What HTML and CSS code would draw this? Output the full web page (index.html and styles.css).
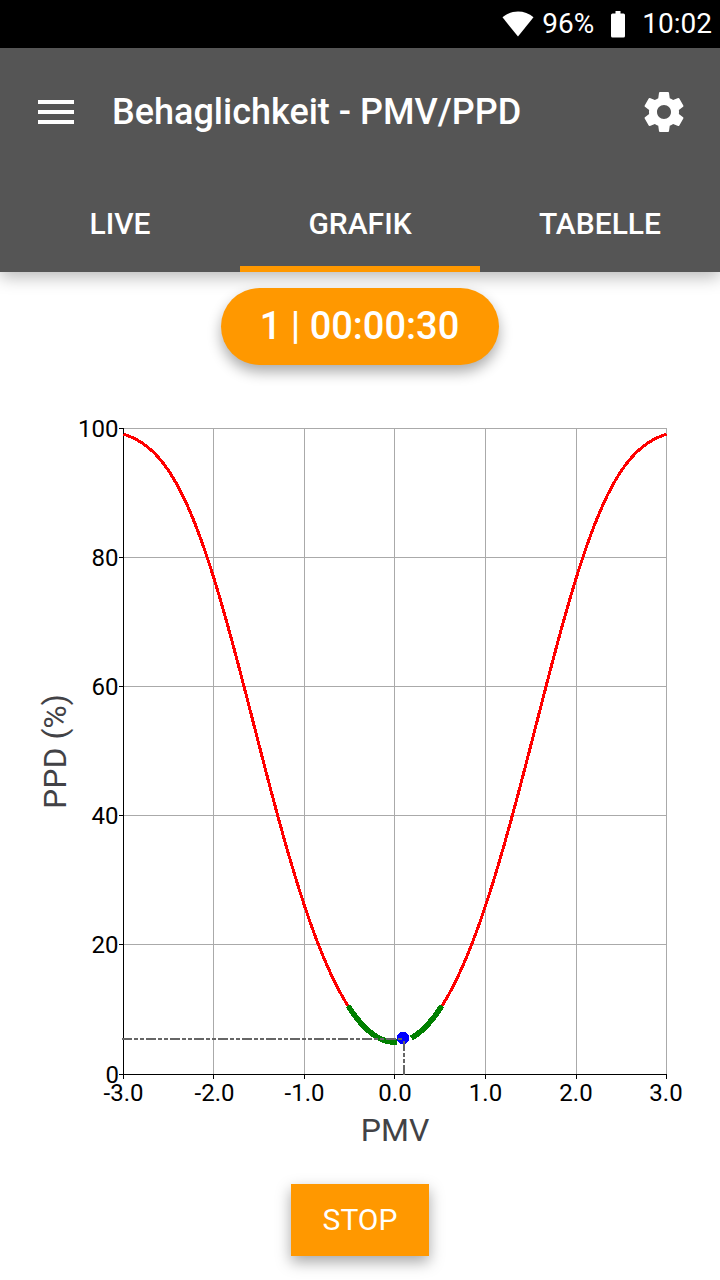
FILE: index.html
```html
<!DOCTYPE html>
<html lang="de">
<head>
<meta charset="utf-8">
<title>Behaglichkeit - PMV/PPD</title>
<link rel="stylesheet" href="styles.css">
</head>
<body>
<div class="status-bar">
  <svg class="wifi" width="32" height="26" viewBox="0 0 32 26"><path d="M0.5 6.3C9-1.300 23-1.300 31.500 6.300L16 25.600Z" fill="#fff"/></svg>
  <span class="battery-level">96%</span>
  <svg class="battery" width="14" height="27" viewBox="0 0 14 27"><path d="M4.500 0h5v2.500h3q1.500 0 1.500 1.500v21q0 1.500-1.500 1.500h-11q-1.500 0-1.500-1.500v-21q0-1.500 1.500-1.500h3z" fill="#fff"/></svg>
  <span class="clock">10:02</span>
</div>
<header class="app-header">
  <div class="toolbar">
    <svg class="menu" width="36" height="24" viewBox="0 0 36 24"><path d="M0 0h36v4H0zM0 10h36v4H0zM0 20h36v4H0z" fill="#fff"/></svg>
    <h1 class="title">Behaglichkeit - PMV/PPD</h1>
    <svg class="settings" width="48" height="48" viewBox="0 0 24 24"><path fill="#fff" d="M19.430 12.980c.04-.32.07-.64.07-.98s-.03-.66-.07-.98l2.110-1.650c.19-.15.24-.42.12-.64l-2-3.460c-.12-.22-.39-.3-.61-.22l-2.490 1c-.52-.4-1.080-.73-1.690-.98l-.38-2.650C14.460 2.180 14.250 2 14 2h-4c-.25 0-.46.18-.49.42l-.38 2.650c-.61.25-1.170.59-1.690.98l-2.490-1c-.23-.09-.49 0-.61.22l-2 3.460c-.13.22-.07.49.12.64l2.110 1.650c-.04.32-.07.65-.07.98s.03.66.07.98l-2.110 1.650c-.19.15-.24.42-.12.64l2 3.460c.12.22.39.3.61.22l2.490-1c.52.4 1.080.73 1.690.98l.38 2.650c.03.24.24.42.49.42h4c.25 0 .46-.18.49-.42l.38-2.650c.61-.25 1.170-.59 1.690-.98l2.490 1c.23.09.49 0 .61-.22l2-3.460c.12-.22.07-.49-.12-.64l-2.110-1.650zM12 15.500c-1.930 0-3.500-1.570-3.500-3.500s1.570-3.500 3.500-3.500 3.500 1.570 3.500 3.500-1.570 3.500-3.500 3.500z"/></svg>
  </div>
  <nav class="tabs">
    <div class="tab">LIVE</div>
    <div class="tab tab-active">GRAFIK</div>
    <div class="tab">TABELLE</div>
  </nav>
</header>
<main class="content">
  <div class="timer">1 | 00:00:30</div>
  <svg class="chart" width="720" height="760" viewBox="0 400 720 760">
    <g class="grid">
      <path d="M213.500 428V1074M304.500 428V1074M394.500 428V1074M485.500 428V1074M576.500 428V1074M666.500 428V1074M123 428.500H667M123 557.500H667M123 686.500H667M123 815.500H667M123 944.500H667"/>
    </g>
    <path class="axes" d="M123.500 428V1079M119 1074.500H667M119 428.500h4M119 557.500h4M119 686.500h4M119 815.500h4M119 944.500h4M213.500 1074v5M304.500 1074v5M394.500 1074v5M485.500 1074v5M576.500 1074v5M666.500 1074v5"/>
    <path class="curve" id="curve"/>
    <path class="comfort" id="comfort"/>
    <circle class="point" cx="403" cy="1038" r="6.300"/>
    <path class="guide" d="M122 1039H402M404 1075V1041"/>
    <g class="y-labels">
      <text x="118.500" y="437">100</text><text x="118.500" y="566">80</text><text x="118.500" y="695">60</text><text x="118.500" y="824">40</text><text x="118.500" y="953">20</text><text x="119" y="1083">0</text>
    </g>
    <g class="x-labels">
      <text x="123.500" y="1101">-3.0</text><text x="214.500" y="1101">-2.0</text><text x="304.500" y="1101">-1.0</text><text x="395" y="1101">0.0</text><text x="485.500" y="1101">1.0</text><text x="576" y="1101">2.0</text><text x="666" y="1101">3.0</text>
    </g>
    <text class="axis-title" x="395" y="1141">PMV</text>
    <text class="axis-title" transform="translate(65.500 751.500) rotate(-90)">PPD (%)</text>
  </svg>
  <button class="stop">STOP</button>
</main>
<script src="chart.js"></script>
</body>
</html>
```
FILE: styles.css
```css
body {
  margin: 0;
  width: 720px;
  height: 1280px;
  overflow: hidden;
  display: flex;
  flex-direction: column;
  background: #fff;
  font-family: Roboto, sans-serif;
}
.status-bar {
  height: 48px;
  box-sizing: border-box;
  padding-right: 8px;
  display: flex;
  justify-content: flex-end;
  align-items: center;
  background: #000;
  color: #fff;
  font-size: 28px;
}
.battery-level, .clock { padding-bottom: 2px; }
.wifi { margin-right: 8px; }
.battery { margin: 0 17px; }
.app-header {
  height: 224px;
  background: #555;
  color: #fff;
  box-shadow: 0 5px 16px rgba(0, 0, 0, .28);
}
.toolbar {
  height: 128px;
  box-sizing: border-box;
  padding: 0 32px 0 38px;
  display: flex;
  align-items: center;
}
.title {
  flex: 1;
  margin: 0 0 0 38px;
  font-size: 36px;
  font-weight: 500;
  white-space: nowrap;
}
.tabs {
  height: 96px;
  display: grid;
  grid-template-columns: repeat(3, 1fr);
}
.tab {
  display: flex;
  justify-content: center;
  align-items: center;
  padding-bottom: 2px;
  font-size: 30px;
  font-weight: 500;
}
.tab-active { box-shadow: inset 0 -6px #ff9800; }
.content {
  display: flex;
  flex-direction: column;
  align-items: center;
  padding-top: 16px;
}
.timer {
  width: 278px;
  height: 77px;
  box-sizing: border-box;
  padding: 0 1px 2px 0;
  border-radius: 39px;
  display: flex;
  justify-content: center;
  align-items: center;
  background: #ff9800;
  color: #fff;
  font-size: 38px;
  font-weight: 500;
  box-shadow: 0 7px 14px rgba(0, 0, 0, .33);
}
.chart {
  display: block;
  margin-top: 35px;
}
.grid path, .axes {
  fill: none;
  stroke-width: 1;
  shape-rendering: crispEdges;
}
.grid path { stroke: #aaa; }
.axes { stroke: #000; }
.curve, .comfort, .guide {
  fill: none;
  shape-rendering: crispEdges;
}
.curve { stroke: #f00; stroke-width: 3; }
.comfort { stroke: #008000; stroke-width: 5.5; }
.guide { stroke: #666; stroke-width: 2; stroke-dasharray: 10 2 4 2 4 2; }
.point { fill: #00f; shape-rendering: crispEdges; }
.x-labels, .y-labels { font-size: 24px; fill: #000; }
.x-labels { text-anchor: middle; }
.y-labels { text-anchor: end; }
.axis-title {
  font-size: 32px;
  fill: #424246;
  text-anchor: middle;
}
.stop {
  width: 138px;
  height: 72px;
  margin-top: 24px;
  padding: 0 0 2px;
  border: 0;
  background: #ff9800;
  color: #fff;
  font: 30px Roboto, sans-serif;
  box-shadow: 0 6px 14px rgba(0, 0, 0, .35);
}
```
FILE: chart.js
```js
// Predicted percentage dissatisfied for a given predicted mean vote.
function ppd(pmv) {
  return 100 - 95 * Math.exp(-(0.03353 * Math.pow(pmv, 4) + 0.2179 * pmv * pmv));
}

function linePath(from, to) {
  const steps = Math.round((to - from) / 0.05);
  const points = [];
  for (let i = 0; i <= steps; i++) {
    const v = from + (to - from) * i / steps;
    points.push((395 + v * 90.5).toFixed(2) + ' ' + (1074.5 - ppd(v) * 6.46).toFixed(2));
  }
  return 'M' + points.join('L');
}

document.getElementById('curve').setAttribute('d', linePath(-3, -0.5) + linePath(0.5, 3));
document.getElementById('comfort').setAttribute('d', linePath(-0.52, 0.02) + linePath(0.18, 0.52));
```
